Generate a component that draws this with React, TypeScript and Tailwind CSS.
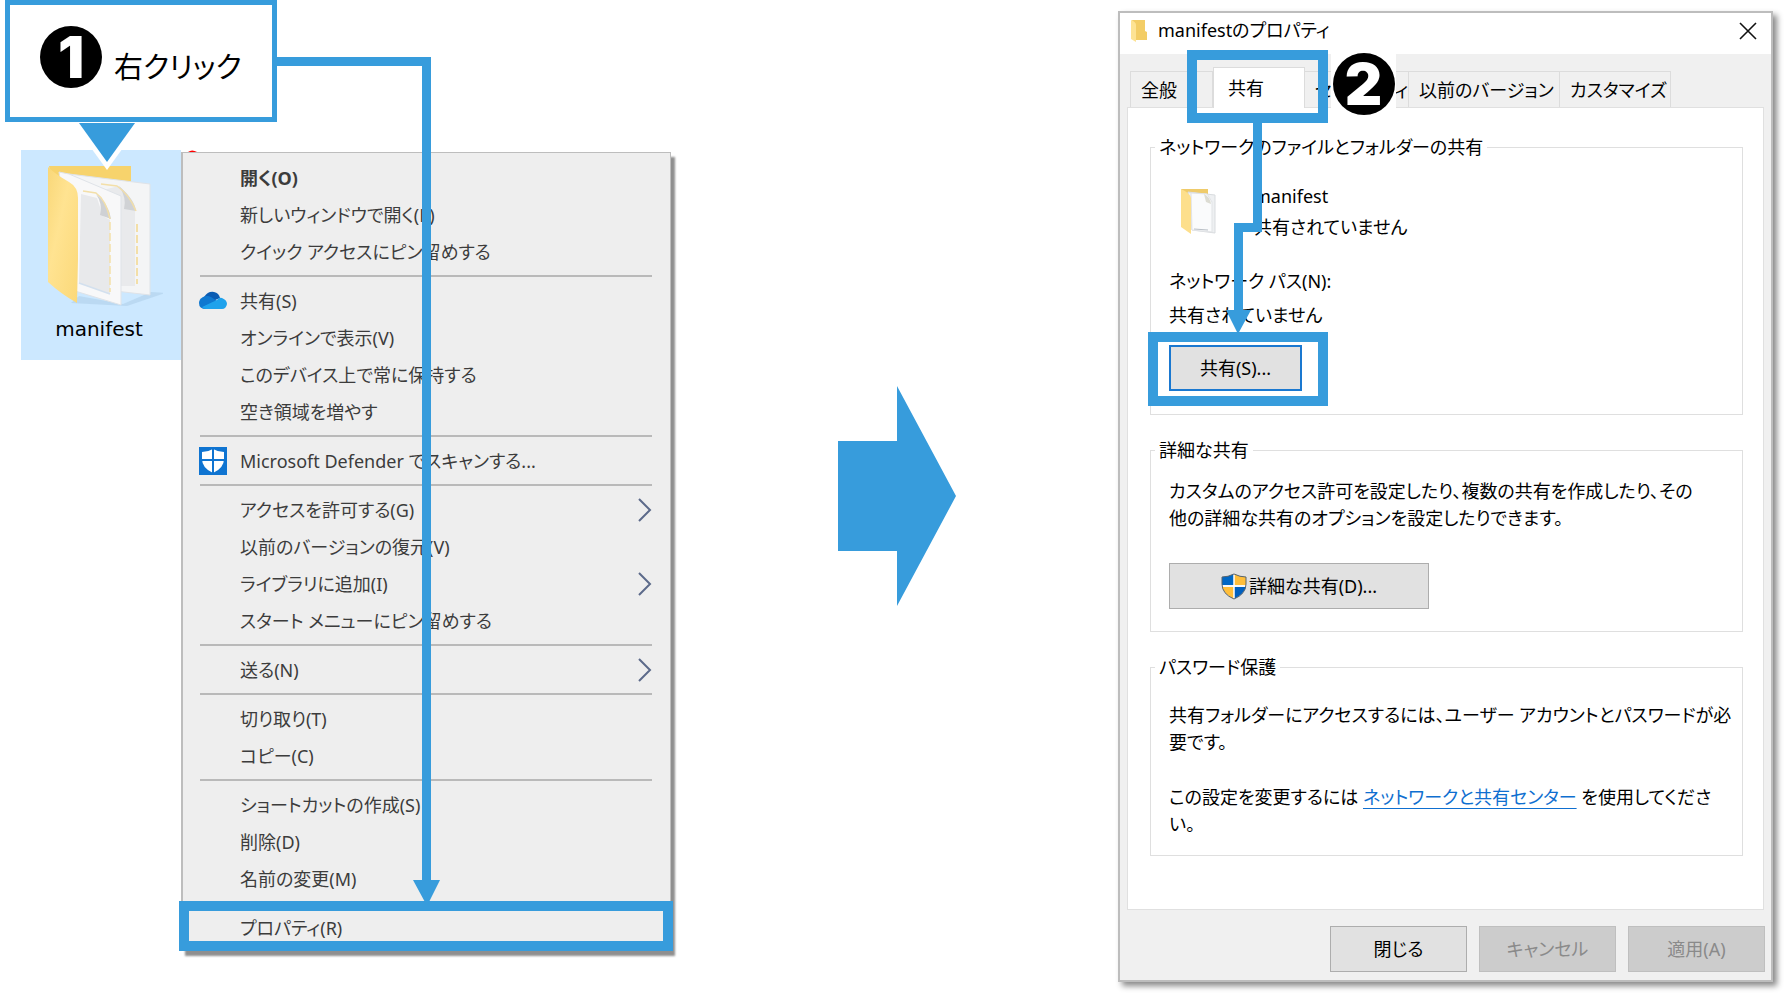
import { Fragment } from "react";
import type { ReactNode } from "react";

function FolderLarge() {
  return (
    <svg viewBox="0 0 120 145" className="ml-1 h-[145px] w-[120px]" aria-hidden="true">
      <defs>
        <linearGradient id="folderFront" x1="0" y1="0" x2="1" y2="1">
          <stop offset="0" stopColor="#f9d778" />
          <stop offset="0.4" stopColor="#ffe391" />
          <stop offset="1" stopColor="#fbd878" />
        </linearGradient>
      </defs>
      <path d="M28 139 L36 132 L80 140 L108 128 L122 129 L84 142 Z" fill="#b3d3ec" opacity="0.7" />
      <path d="M6 2 H88 V30 L60 80 H20 Z" fill="#f7d36c" />
      <path d="M26 10 L107 20 V131 L72 127 Z" fill="#f4f5f6" stroke="#dfe3e8" />
      <path d="M60 26 L76 22 L84 30 L92 46 V122 H72 Z" fill="#e9eaec" />
      <path d="M76 22 Q84 34 81 45 L93 47 Q92 36 76 22" fill="#d0d2d5" />
      <path d="M58 20 L74 22 Q86 30 93 47" stroke="#f3dfa8" strokeWidth="1.5" fill="none" />
      <path d="M94 60 V120" stroke="#f3dfa8" strokeWidth="2" strokeDasharray="8 3" />
      <path d="M16 8 L26 10 L78 32 V141 L32 127 Z" fill="#f8f8f9" stroke="#dfe3e8" />
      <path d="M38 30 L54 34 L60 52 L67 56 V130 L36 119 Z" fill="#e8e9eb" />
      <path d="M53 30 Q60 40 57 51 L68 55 Q66 40 53 30" fill="#cfd1d4" />
      <path d="M67 58 V128" stroke="#f3dfa8" strokeWidth="1.5" strokeDasharray="8 3" fill="none" />
      <path d="M36 119 L67 130" stroke="#d3e0ee" strokeWidth="1.5" fill="none" />
      <path d="M40 27 L53 29 Q63 36 67 55" stroke="#f3dfa8" strokeWidth="1.5" fill="none" />
      <path d="M5 3 Q12 10 26 18 Q35 23 35 34 V95 L34 139 Q18 130 5 118 Z" fill="url(#folderFront)" />
    </svg>
  );
}

function FolderMedium() {
  return (
    <svg viewBox="0 0 38 48" className="h-12 w-[38px]" aria-hidden="true">
      <path d="M1 1 H28 V12 L12 30 Z" fill="#efcb6a" />
      <path d="M8 4 L35 7 V45 L12 42 Z" fill="#eef0f2" stroke="#d9dcdf" />
      <path d="M11 5 L27 6 L32 14 V44 L12 42 Z" fill="#fafbfc" stroke="#e1e3e6" />
      <path d="M24 6 L26 14 L31 16 Q30 9 24 6" fill="#dcdcd3" />
      <path d="M14 41 L28 42" stroke="#b9bfc6" />
      <path d="M1 1 Q10 5 11 10 V46 L1 39 Z" fill="#fddf8c" />
    </svg>
  );
}

function FolderSmall() {
  return (
    <svg viewBox="0 0 16 24" className="h-6 w-4" aria-hidden="true">
      <path d="M1 1 H14 V12 L16 13 V21 H5 Z" fill="#f3cd66" />
      <path d="M0 1 Q5 3 5 6 V23 L0 20 Z" fill="#fde394" />
    </svg>
  );
}

function CloudIcon() {
  return (
    <svg viewBox="0 0 28 19" className="h-[19px] w-7" aria-hidden="true">
      <path d="M5 6 Q9 0 15 1 Q20 2 21 7 L14 10 Z" fill="#0a5cb3" />
      <path d="M4 6 Q8 4 12 6 L18 10 L7 18 Q0 18 0 12 Q0 8 4 6" fill="#0f78d0" />
      <path d="M18 9 Q20 6 23 7 Q28 9 28 13 Q27 18 23 18 H7 Q4 18 3 16 Z" fill="#1fa2ec" />
    </svg>
  );
}

function DefenderIcon() {
  return (
    <svg viewBox="0 0 28 28" className="size-7" aria-hidden="true">
      <rect width="28" height="28" fill="#0f74d1" />
      <path d="M14 2 Q19 5 25 5 V12 Q25 21 14 26 Q3 21 3 12 V5 Q9 5 14 2" fill="#fff" />
      <path d="M14 2 V26 M3 13 H25" stroke="#0f74d1" strokeWidth="2" />
    </svg>
  );
}

function ShieldIcon() {
  return (
    <svg viewBox="0 0 26 27" className="h-[27px] w-[26px]" aria-hidden="true">
      <path d="M13 1 Q7 4 1 4 V12 H13 Z" fill="#0067c5" />
      <path d="M13 1 Q19 4 25 4 V12 H13 Z" fill="#ffbe3a" />
      <path d="M1 14 H13 V26 Q3 21 1 14" fill="#ffbe3a" />
      <path d="M25 14 H13 V26 Q23 21 25 14" fill="#005fbe" />
      <path d="M13 1 V26 M1 13 H25" stroke="#fff" strokeWidth="1.5" />
      <path d="M13 1 Q19 4 25 4 V11 Q25 21 13 26 Q1 21 1 11 V4 Q7 4 13 1 Z" fill="none" stroke="#57646e" />
    </svg>
  );
}

function Chevron() {
  return (
    <svg viewBox="0 0 14 24" className="ml-auto h-6 w-3.5" aria-hidden="true">
      <path d="M1 1 L12 12 L1 23" fill="none" stroke="#5c6a8a" strokeWidth="2" />
    </svg>
  );
}

type Item = { label: string; icon?: ReactNode; submenu?: boolean; bold?: boolean; marked?: boolean };

const groups: Item[][] = [
  [
    { label: "開く(O)", bold: true },
    { label: "新しいウィンドウで開く(E)" },
    { label: "クイック アクセスにピン留めする" },
  ],
  [
    { label: "共有(S)", icon: <CloudIcon /> },
    { label: "オンラインで表示(V)" },
    { label: "このデバイス上で常に保持する" },
    { label: "空き領域を増やす" },
  ],
  [{ label: "Microsoft Defender でスキャンする...", icon: <DefenderIcon /> }],
  [
    { label: "アクセスを許可する(G)", submenu: true },
    { label: "以前のバージョンの復元(V)" },
    { label: "ライブラリに追加(I)", submenu: true },
    { label: "スタート メニューにピン留めする" },
  ],
  [{ label: "送る(N)", submenu: true }],
  [{ label: "切り取り(T)" }, { label: "コピー(C)" }],
  [{ label: "ショートカットの作成(S)" }, { label: "削除(D)" }, { label: "名前の変更(M)" }],
  [{ label: "プロパティ(R)", marked: true }],
];

function ContextMenu() {
  return (
    <div
      role="menu"
      className="mt-[152px] border border-l-2 border-[#bdbdbd] bg-[#eeeeee] pt-1.5 pb-1 text-lg text-[#3c3c3c] shadow-[4px_5px_2px_#8f8f8f]"
    >
      {groups.map((group, i) => (
        <Fragment key={group[0].label}>
          {i > 0 && <div role="separator" className="my-[5px] mr-[18px] ml-[17px] h-0.5 bg-[#b9b9b9]" />}
          {group.map((item) => (
            <div key={item.label} className="relative">
              <button
                type="button"
                role="menuitem"
                className="flex h-[37px] w-full items-center gap-[13px] pr-[18px] pl-4 text-left whitespace-nowrap"
              >
                <span className="flex w-7 shrink-0">{item.icon}</span>
                <span className={item.bold ? "font-bold" : ""}>{item.label}</span>
                {item.submenu && <Chevron />}
              </button>
              {item.marked && (
                <div className="pointer-events-none absolute -top-2 -right-[3px] -bottom-[5px] -left-1 border-10 border-[#379cdc]" />
              )}
            </div>
          ))}
        </Fragment>
      ))}
    </div>
  );
}

const tabs = [
  { label: "全般", look: "w-[83px] border-l" },
  { label: "共有", look: "" },
  { label: "セキュリティ", look: "w-[104px]" },
  { label: "以前のバージョン", look: "w-[151px]" },
  { label: "カスタマイズ", look: "w-[111px]" },
];

function Group({ title, children }: { title: string; children: ReactNode }) {
  return (
    <fieldset className="min-w-0 border border-[#dfdfdf] px-[18px]">
      <legend className="-ml-3.5 px-1 leading-[27px]">{title}</legend>
      {children}
    </fieldset>
  );
}

function PropertiesDialog() {
  return (
    <div
      role="dialog"
      aria-labelledby="dialog-title"
      className="relative mt-[11px] border-2 border-[#bdbdbd] bg-[#f0f0f0] text-lg leading-[27px] text-black shadow-[4px_4px_6px_#8a8a8a]"
    >
      <header className="flex h-[41px] items-center gap-[11px] bg-white pr-3.5 pb-1.5 pl-[11px]">
        <FolderSmall />
        <h1 id="dialog-title">manifestのプロパティ</h1>
        <button type="button" aria-label="閉じる" className="ml-auto">
          <svg viewBox="0 0 18 18" className="size-[18px]" aria-hidden="true">
            <path d="M1 1 L17 17 M17 1 L1 17" stroke="#111" strokeWidth="1.6" />
          </svg>
        </button>
      </header>

      <div className="px-[7px]">
        <div role="tablist" className="flex items-end pt-[13px] pl-[3px] whitespace-nowrap">
          {tabs.map((tab) =>
            tab.label === "共有" ? (
              <div key={tab.label} className="relative z-10 -mb-px h-[41px] w-[92px]">
                <button
                  type="button"
                  role="tab"
                  aria-selected="true"
                  className="size-full border border-b-0 border-[#dcdcdc] bg-white pl-3.5 text-left"
                >
                  {tab.label}
                </button>
                <div className="pointer-events-none absolute -top-[17px] -right-[23px] -bottom-[15px] -left-[26px] border-10 border-[#379cdc]" />
                <div className="absolute -top-4 left-[118px] flex h-[66px] w-[65px] items-center justify-center bg-white">
                  <Badge>2</Badge>
                </div>
              </div>
            ) : (
              <button
                key={tab.label}
                type="button"
                role="tab"
                aria-selected="false"
                className={`h-9 border-t border-r border-[#dcdcdc] pt-0.5 pl-[10px] text-left ${tab.look}`}
              >
                {tab.label}
              </button>
            ),
          )}
        </div>

        <div role="tabpanel" className="space-y-[22px] border border-[#e0e0e0] bg-white pt-[26px] pr-5 pb-[53px] pl-[22px]">
          <Group title="ネットワークのファイルとフォルダーの共有">
            <div className="flex items-center gap-9 pt-5 pl-[11px] leading-[31px]">
              <FolderMedium />
              <div>
                <p>manifest</p>
                <p>共有されていません</p>
              </div>
            </div>
            <p className="mt-[25px]">ネットワーク パス(N):</p>
            <p className="mt-[7px]">共有されていません</p>
            <div className="relative mt-4 mb-[23px] w-[133px]">
              <button type="button" className="h-[46px] w-full border-2 border-[#1a78d0] bg-[#e1e1e1]">
                共有(S)...
              </button>
              <div className="pointer-events-none absolute -top-[13px] -right-[26px] -bottom-[15px] -left-[21px] border-10 border-[#379cdc]" />
            </div>
          </Group>

          <Group title="詳細な共有">
            <p className="pt-3.5 whitespace-nowrap">
              カスタムのアクセス許可を設定したり、複数の共有を作成したり、その
              <br />
              他の詳細な共有のオプションを設定したりできます。
            </p>
            <button
              type="button"
              className="mt-[31px] mb-[22px] flex h-[46px] w-[260px] items-center justify-center gap-0.5 border border-[#adadad] bg-[#e1e1e1]"
            >
              <ShieldIcon />
              詳細な共有(D)...
            </button>
          </Group>

          <Group title="パスワード保護">
            <p className="pt-[21px] whitespace-nowrap">
              共有フォルダーにアクセスするには、ユーザー アカウントとパスワードが必
              <br />
              要です。
            </p>
            <p className="mt-7 mb-[17px] whitespace-nowrap">
              この設定を変更するには{" "}
              <a href="#network" className="text-[#0f6fd0] underline underline-offset-4">
                ネットワークと共有センター
              </a>{" "}
              を使用してくださ
              <br />
              い。
            </p>
          </Group>
        </div>
      </div>

      <footer className="flex justify-end gap-3 pt-4 pr-1.5 pb-2">
        <button type="button" className="h-[46px] w-[137px] border border-[#adadad] bg-[#e1e1e1]">
          閉じる
        </button>
        <button type="button" disabled className="h-[46px] w-[137px] border border-[#bfbfbf] bg-[#cccccc] text-[#8a8a8a]">
          キャンセル
        </button>
        <button type="button" disabled className="h-[46px] w-[137px] border border-[#bfbfbf] bg-[#cccccc] text-[#8a8a8a]">
          適用(A)
        </button>
      </footer>

      <svg
        viewBox="0 0 40 212"
        className="pointer-events-none absolute top-[109px] left-[105px] z-10 h-[212px] w-10"
        aria-hidden="true"
      >
        <path d="M28 0 H37 V110 H18 V188 H26 L13 212 L1 188 H9 V101 H28 Z" fill="#379cdc" />
      </svg>
    </div>
  );
}

function Badge({ children }: { children: ReactNode }) {
  return (
    <span className="flex size-[62px] shrink-0 items-center justify-center rounded-full bg-black font-[Inter,sans-serif] text-[58px] leading-none font-black text-white">
      {children}
    </span>
  );
}

export default function App() {
  return (
    <main
      lang="ja"
      className="relative grid min-h-screen grid-cols-[160px_minmax(0,490fr)_minmax(0,447fr)_minmax(0,655fr)] items-start bg-white pr-[13px] pl-[21px] font-['Noto_Sans','Noto_Sans_CJK_JP',sans-serif] [font-feature-settings:'palt']"
    >
      <figure className="mt-[150px] flex h-[210px] flex-col items-center bg-[#cce8ff] pt-3.5">
        <FolderLarge />
        <figcaption className="mr-1 font-['DejaVu_Sans',sans-serif] text-xl leading-10 text-black">manifest</figcaption>
      </figure>

      <ContextMenu />

      <div className="mt-[386px] flex justify-center">
        <svg viewBox="0 0 118 220" className="ml-1 h-[220px] w-[118px]" aria-hidden="true">
          <path d="M0 55 H59 V0 L118 110 L59 220 V165 H0 Z" fill="#379cdc" />
        </svg>
      </div>

      <PropertiesDialog />

      <svg
        viewBox="0 0 450 910"
        className="pointer-events-none absolute top-0 left-0 h-[910px] w-[450px]"
        aria-hidden="true"
      >
        <path d="M188 152 Q192 149 197 152 Z" fill="#f00" />
        <path d="M73 123 H141 L107 170 Z" fill="#fff" />
        <path d="M79 123 H135 L107 162 Z" fill="#379cdc" />
        <path d="M277 57 H431 V880 H440 L428 904 H426 L413 880 H422 V66 H277 Z" fill="#379cdc" />
      </svg>

      <div className="absolute top-0 left-[5px] flex h-[122px] w-[272px] items-center gap-3 border-5 border-[#379cdc] bg-white pl-[30px] text-[29px] whitespace-nowrap text-black">
        <div className="pb-2">
          <Badge>1</Badge>
        </div>
        <span className="pt-3">右クリック</span>
      </div>
    </main>
  );
}
